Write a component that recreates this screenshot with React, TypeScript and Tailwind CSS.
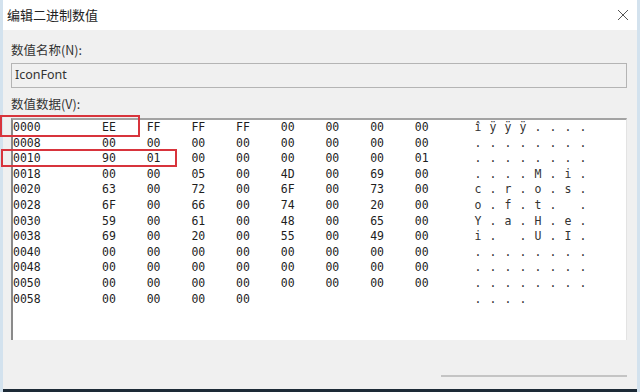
const rows: { addr: string; hex: string[]; ascii: string[] }[] = [
  { addr: '0000', hex: ['EE', 'FF', 'FF', 'FF', '00', '00', '00', '00'], ascii: ['î', 'ÿ', 'ÿ', 'ÿ', '.', '.', '.', '.'] },
  { addr: '0008', hex: ['00', '00', '00', '00', '00', '00', '00', '00'], ascii: ['.', '.', '.', '.', '.', '.', '.', '.'] },
  { addr: '0010', hex: ['90', '01', '00', '00', '00', '00', '00', '01'], ascii: ['.', '.', '.', '.', '.', '.', '.', '.'] },
  { addr: '0018', hex: ['00', '00', '05', '00', '4D', '00', '69', '00'], ascii: ['.', '.', '.', '.', 'M', '.', 'i', '.'] },
  { addr: '0020', hex: ['63', '00', '72', '00', '6F', '00', '73', '00'], ascii: ['c', '.', 'r', '.', 'o', '.', 's', '.'] },
  { addr: '0028', hex: ['6F', '00', '66', '00', '74', '00', '20', '00'], ascii: ['o', '.', 'f', '.', 't', '.', ' ', '.'] },
  { addr: '0030', hex: ['59', '00', '61', '00', '48', '00', '65', '00'], ascii: ['Y', '.', 'a', '.', 'H', '.', 'e', '.'] },
  { addr: '0038', hex: ['69', '00', '20', '00', '55', '00', '49', '00'], ascii: ['i', '.', ' ', '.', 'U', '.', 'I', '.'] },
  { addr: '0040', hex: ['00', '00', '00', '00', '00', '00', '00', '00'], ascii: ['.', '.', '.', '.', '.', '.', '.', '.'] },
  { addr: '0048', hex: ['00', '00', '00', '00', '00', '00', '00', '00'], ascii: ['.', '.', '.', '.', '.', '.', '.', '.'] },
  { addr: '0050', hex: ['00', '00', '00', '00', '00', '00', '00', '00'], ascii: ['.', '.', '.', '.', '.', '.', '.', '.'] },
  { addr: '0058', hex: ['00', '00', '00', '00'], ascii: ['.', '.', '.', '.'] },
];

const ui = "font-['Noto_Sans_CJK_SC','Microsoft_YaHei',sans-serif]";

export default function App() {
  return (
    <div className="relative flex h-[392px] w-[640px] flex-col border-x-[3px] border-[#d3e2ee] bg-[#f0f0f0]">
      {/* title bar */}
      <div className="flex h-[30px] shrink-0 items-center justify-between bg-white pl-[4px] pr-[8px]">
        <span className={`${ui} text-[13px] text-[#222]`}>编辑二进制数值</span>
        <svg width="12" height="12" viewBox="0 0 12 12" className="text-[#555]">
          <path d="M1 1 L11 11 M11 1 L1 11" stroke="currentColor" strokeWidth="1" />
        </svg>
      </div>

      <div className="flex flex-1 flex-col pl-[8px] pr-[10px]">
        <div className={`${ui} mt-[12px] h-[16px] text-[12.5px] leading-[16px] text-[#333]`}>数值名称(N):</div>
        <div className="mt-[5px] flex h-[25px] items-center border border-[#b4b4b4] bg-[#f0f0f0] pl-[3px]">
          <span className="font-['Noto_Sans','Segoe_UI',sans-serif] text-[12.5px] text-[#333]">IconFont</span>
        </div>

        <div className={`${ui} mt-[8px] h-[16px] text-[12.5px] leading-[16px] text-[#333]`}>数值数据(V):</div>
        <div className="mt-[6px] h-[222px] border-l-2 border-t-2 border-r border-l-[#8a8a8a] border-t-[#a3a3a3] border-r-[#e3e3e3] bg-white font-['DejaVu_Sans_Mono',monospace] text-[11.5px] leading-[15.6px] text-[#1e1e1e]">
          {rows.map((r) => (
            <div key={r.addr} className="flex">
              <span className="w-[89px]">{r.addr}</span>
              {r.hex.map((h, i) => (
                <span key={i} className="w-[44.7px]">{h}</span>
              ))}
              {r.hex.length < 8 && <span style={{ width: (8 - r.hex.length) * 44.7 }} />}
              <span className="ml-[15px] flex text-[#333]">
                {r.ascii.map((c, i) => (
                  <span key={i} className="w-[15px] whitespace-pre">{c}</span>
                ))}
              </span>
            </div>
          ))}
        </div>

        <div className="flex flex-1 flex-col justify-end">
          <div className="mb-[12px] ml-[430px] h-[2px] bg-[#c4c4c4]" />
        </div>
      </div>
      <div className="h-[3px] shrink-0 bg-[#1d2a36]" />

      {/* annotation boxes */}
      <div className="absolute left-[-3px] top-[115px] h-[22px] w-[140px] border-2 border-[#d8343c]" />
      <div className="absolute left-[-2px] top-[149px] h-[18px] w-[176px] border-2 border-[#d8343c]" />
    </div>
  );
}
